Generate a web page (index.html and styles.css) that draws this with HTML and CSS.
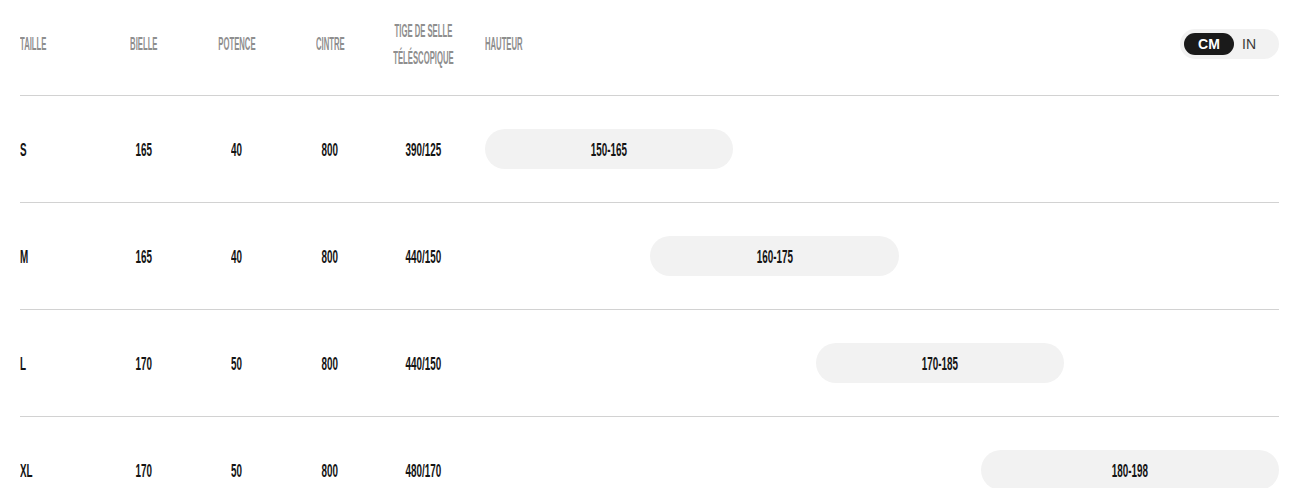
FILE: index.html
```html
<!DOCTYPE html>
<html lang="fr">
<head>
<meta charset="utf-8">
<title>Tailles</title>
<link rel="stylesheet" href="styles.css">
</head>
<body>
<div class="sizes">
  <div class="row head">
    <div class="cell first"><span class="cx">TAILLE</span></div>
    <div class="cell"><span class="cx">BIELLE</span></div>
    <div class="cell"><span class="cx">POTENCE</span></div>
    <div class="cell"><span class="cx">CINTRE</span></div>
    <div class="cell two"><span class="cx">TIGE DE SELLE<br>TÉLÉSCOPIQUE</span></div>
    <div class="range head-range">
      <span class="cx left">HAUTEUR</span>
      <div class="toggle">
        <span class="opt on">CM</span>
        <span class="opt">IN</span>
      </div>
    </div>
  </div>

  <div class="row">
    <div class="cell first"><span class="cx v">S</span></div>
    <div class="cell"><span class="cx v">165</span></div>
    <div class="cell"><span class="cx v">40</span></div>
    <div class="cell"><span class="cx v">800</span></div>
    <div class="cell"><span class="cx v">390/125</span></div>
    <div class="range"><div class="track"><div class="bar" style="margin-left:0%;width:31.25%"><span class="cx v">150-165</span></div></div></div>
  </div>

  <div class="row">
    <div class="cell first"><span class="cx v">M</span></div>
    <div class="cell"><span class="cx v">165</span></div>
    <div class="cell"><span class="cx v">40</span></div>
    <div class="cell"><span class="cx v">800</span></div>
    <div class="cell"><span class="cx v">440/150</span></div>
    <div class="range"><div class="track"><div class="bar" style="margin-left:20.833%;width:31.25%"><span class="cx v">160-175</span></div></div></div>
  </div>

  <div class="row">
    <div class="cell first"><span class="cx v">L</span></div>
    <div class="cell"><span class="cx v">170</span></div>
    <div class="cell"><span class="cx v">50</span></div>
    <div class="cell"><span class="cx v">800</span></div>
    <div class="cell"><span class="cx v">440/150</span></div>
    <div class="range"><div class="track"><div class="bar" style="margin-left:41.667%;width:31.25%"><span class="cx v">170-185</span></div></div></div>
  </div>

  <div class="row">
    <div class="cell first"><span class="cx v">XL</span></div>
    <div class="cell"><span class="cx v">170</span></div>
    <div class="cell"><span class="cx v">50</span></div>
    <div class="cell"><span class="cx v">800</span></div>
    <div class="cell"><span class="cx v">480/170</span></div>
    <div class="range"><div class="track"><div class="bar" style="margin-left:62.5%;width:37.5%"><span class="cx v">180-198</span></div></div></div>
  </div>
</div>
</body>
</html>
```

FILE: styles.css
```css
html, body {
  margin: 0;
  padding: 0;
  background: #ffffff;
}

body {
  font-family: "Liberation Sans", Arial, sans-serif;
  overflow: hidden;
}

.sizes {
  padding: 0 15px 0 20px;
}

.row {
  display: grid;
  grid-template-columns: 77.5px repeat(4, 93px) 1fr;
  align-items: center;
  height: 107px;
  box-sizing: border-box;
  border-top: 1px solid #d2d2d2;
}

.row.head {
  border-top: none;
  height: 95px;
  padding-bottom: 8px;
}

.cell {
  display: flex;
  justify-content: center;
  text-align: center;
}

.cell.first {
  justify-content: flex-start;
  text-align: left;
}

.cx {
  display: inline-block;
  font-size: 19px;
  line-height: 27px;
  font-weight: 700;
  color: #8e8e8e;
  transform: scaleX(0.405);
  transform-origin: center;
  white-space: nowrap;
}

.first .cx,
.cx.left {
  transform-origin: left center;
}

.cx.v {
  color: #141414;
  transform: scaleX(0.52);
}

.first .cx.v {
  transform-origin: left center;
}

.range {
  padding-left: 15.5px;
}

.head-range {
  display: flex;
  align-items: center;
  justify-content: space-between;
}

.track {
  display: flex;
}

.bar {
  height: 40px;
  border-radius: 20px;
  background: #f2f2f2;
  display: flex;
  align-items: center;
  justify-content: center;
}

.toggle {
  display: flex;
  align-items: center;
  width: 99px;
  height: 30px;
  box-sizing: border-box;
  padding: 4px;
  border-radius: 15px;
  background: #f2f2f2;
  font-family: "Liberation Sans", Arial, sans-serif;
  font-size: 14px;
}

.opt {
  display: flex;
  align-items: center;
  justify-content: center;
  height: 22px;
  color: #3a3a3a;
  padding-left: 8px;
}

.opt.on {
  width: 50px;
  padding-left: 0;
  border-radius: 11px;
  background: #1a1a1a;
  color: #ffffff;
  font-weight: 700;
}
```
